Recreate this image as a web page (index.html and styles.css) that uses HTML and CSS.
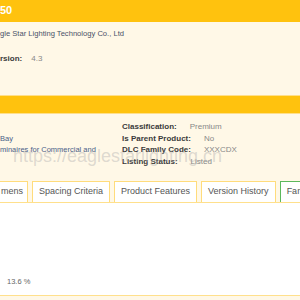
FILE: index.html
```html
<!DOCTYPE html>
<html lang="en">
<head>
  <meta charset="UTF-8"/>
  <title>Product Listing</title>
  <link rel="stylesheet" href="styles.css">
</head>
<body>

  <!-- Title -->
  <div class="title-bar">50</div>

  <!-- Company info -->
  <div class="info-panel">
    <div class="company">gle Star Lighting Technology Co., Ltd</div>
    <div class="field"><span class="label">rsion:</span><span class="value">4.3</span></div>
  </div>

  <div class="section-bar"></div>

  <!-- Product details -->
  <div class="detail-panel">
    <div class="detail-grid">
      <div class="detail-left">
        <div>Bay</div>
        <div>minaires for Commercial and</div>
      </div>
      <div class="detail-right">
        <div class="field"><span class="label">Classification:</span><span class="value">Premium</span></div>
        <div class="field"><span class="label">Is Parent Product:</span><span class="value">No</span></div>
        <div class="field"><span class="label">DLC Family Code:</span><span class="value">XXXCDX</span></div>
        <div class="field"><span class="label">Listing Status:</span><span class="value">Listed</span></div>
      </div>
    </div>
    <div class="watermark">https://eaglestarlighting.cn</div>

    <!-- Tabs -->
    <div class="tabs">
      <div class="tab cut">mens</div>
      <div class="tab">Spacing Criteria</div>
      <div class="tab">Product Features</div>
      <div class="tab">Version History</div>
      <div class="tab active">Family Members</div>
    </div>
  </div>

  <div class="tab-body">
    <div class="stat">13.6 %</div>
  </div>

</body>
</html>
```

FILE: styles.css
```css
* { box-sizing: border-box; }
body {
  margin: 0;
  font-family: "Liberation Sans", Arial, sans-serif;
  background: #fff8e7;
  color: #444;
  overflow: hidden;
  width: 300px;
  height: 300px;
}

/* Title bar */
.title-bar {
  height: 22px;
  background: #ffc20e;
  color: #fff;
  font-weight: bold;
  font-size: 11px;
  line-height: 20px;
  white-space: nowrap;
}

/* Company panel */
.info-panel {
  height: 73px;
  padding-top: 6px;
}
.company {
  font-size: 7.6px;
  line-height: 12px;
  color: #4a5268;
  white-space: nowrap;
}
.info-panel .field {
  margin-top: 13px;
}
.info-panel .value { margin-left: 9px; }
.field {
  font-size: 8px;
  line-height: 12px;
  white-space: nowrap;
}
.label {
  font-weight: bold;
  color: #3a3a3a;
}
.value {
  color: #888;
}

.section-bar {
  height: 19px;
  background: #ffc20e;
  border-top: 1px solid #ffdf8a;
  border-bottom: 1px solid #ffdf8a;
}

/* Details */
.detail-panel {
  position: relative;
  padding-top: 7px;
}
.detail-grid {
  display: grid;
  grid-template-columns: 122px 1fr;
}
.detail-left {
  padding-top: 13px;
  font-size: 7.5px;
  line-height: 10.5px;
  color: #4a6088;
  white-space: nowrap;
}
.detail-right .field {
  line-height: 11.5px;
}
.detail-right .value { margin-left: 13px; }

.watermark {
  position: absolute;
  top: 31px; left: 13px;
  font-size: 18px;
  line-height: 22px;
  color: rgba(170,170,170,0.4);
  white-space: nowrap;
  pointer-events: none;
}

/* Tabs */
.tabs {
  display: flex;
  gap: 4px;
  margin-top: 14px;
  border-bottom: 1px solid #ffe08c;
  white-space: nowrap;
}
.tab {
  background: #fff;
  border: 1.5px solid #ffdc7c;
  border-bottom: none;
  padding: 0 6px;
  height: 21px;
  line-height: 19px;
  font-size: 9px;
  color: #555;
  flex-shrink: 0;
}
.tab.cut {
  border-left: none;
  padding-left: 1px;
  padding-right: 4px;
}
.tab.active { border-color: #5cb85c; }

.tab-body {
  background: #fff;
  height: 93px;
  border-bottom: 1px solid #ffe08c;
  padding: 74px 0 0 7px;
}
.stat {
  font-size: 7.5px;
  color: #666;
}
```
